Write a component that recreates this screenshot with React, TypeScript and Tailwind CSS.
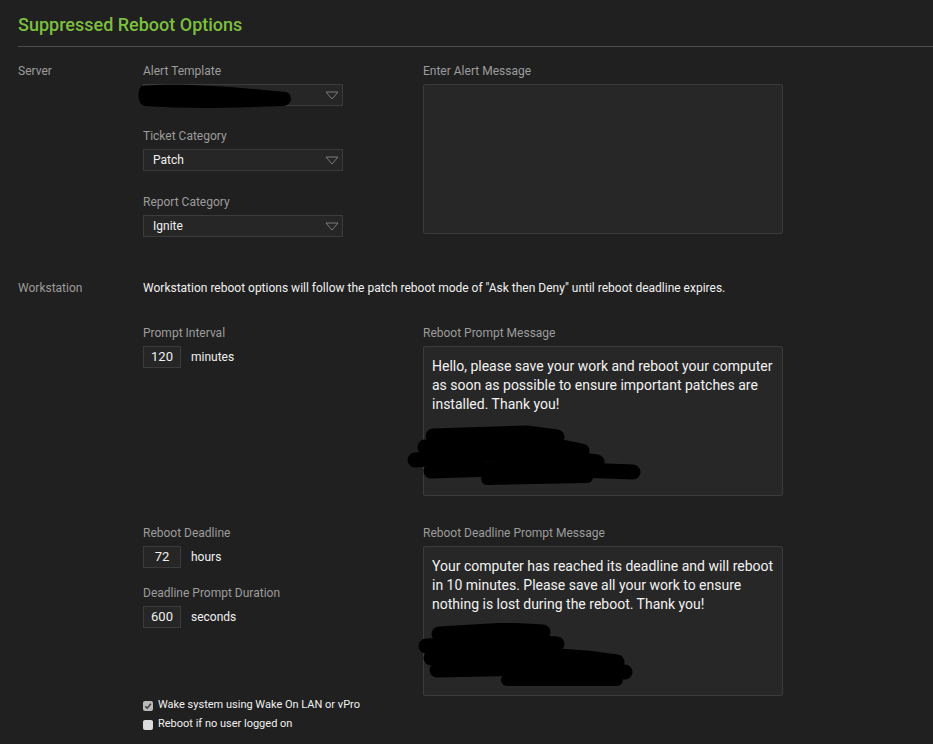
import type { ReactNode } from "react";

const FONT = { fontFamily: "Roboto, 'Liberation Sans', sans-serif" };

function Label({ children }: { children: ReactNode }) {
  return <div className="text-[12px] leading-[14px] text-[#9c9c9c]">{children}</div>;
}

function Arrow() {
  return (
    <svg width="14" height="9" viewBox="0 0 14 9" className="shrink-0">
      <polygon points="1,1 13,1 7,8" fill="none" stroke="#7a7a7a" strokeWidth="1" />
    </svg>
  );
}

function Select({ value, children }: { value?: string; children?: ReactNode }) {
  return (
    <div className="relative mt-[6px] flex h-[22px] w-[200px] items-center justify-between border border-[#3b3b3b] bg-[#262626] pl-[9px] pr-[3px]">
      <span className="text-[12px] text-[#f0f0f0]">{value}</span>
      <Arrow />
      {children}
    </div>
  );
}

function NumberField({ value, unit }: { value: string; unit: string }) {
  return (
    <div className="mt-[6px] flex items-center gap-[10px]">
      <div className="flex h-[22px] w-[38px] items-center justify-center border border-[#3b3b3b] bg-[#262626] text-[13px] text-[#f0f0f0]">
        {value}
      </div>
      <span className="text-[12px] text-[#f0f0f0]">{unit}</span>
    </div>
  );
}

function MessageBox({ text, children }: { text?: string; children?: ReactNode }) {
  return (
    <div className="relative mt-[6px] h-[150px] w-[360px] rounded-[2px] border border-[#3b3b3b] bg-[#272727] px-[8px] pt-[10px] text-[14px] leading-[19px] text-[#f2f2f2]">
      {text}
      {children}
    </div>
  );
}

function Checkbox({ checked, label }: { checked?: boolean; label: string }) {
  return (
    <div className="flex h-[19px] items-center gap-[5px]">
      <span
        className={`flex h-[10px] w-[10px] items-center justify-center rounded-[2px] ${checked ? "bg-[#b9b9b9]" : "bg-[#dcdcdc]"}`}
      >
        {checked && (
          <svg width="8" height="8" viewBox="0 0 8 8">
            <path d="M1.2 4.2 L3.2 6.2 L6.8 1.8" fill="none" stroke="#3a3a3a" strokeWidth="1.4" />
          </svg>
        )}
      </span>
      <span className="text-[11px] text-[#f0f0f0]">{label}</span>
    </div>
  );
}

export default function App() {
  return (
    <div className="min-h-[744px] w-[933px] bg-[#202020]" style={FONT}>
      <div className="ml-[18px] border-b border-[#4d4d4d] pb-[10px] pt-[14px]">
        <h1 className="text-[18px] font-medium leading-[22px] text-[#7cbf3f]">Suppressed Reboot Options</h1>
      </div>

      {/* Server */}
      <div className="mt-[17px] flex pl-[18px]">
        <div className="w-[125px]">
          <Label>Server</Label>
        </div>
        <div className="w-[280px]">
          <Label>Alert Template</Label>
          <Select>
            <svg className="absolute left-[-8px] top-[-2px]" width="160" height="26" viewBox="0 0 160 26">
              <path d="M6 3 C40 0 90 3 150 9 C157 11 157 21 148 23 C100 25 50 26 8 23 C1 21 1 5 6 3 Z" fill="#000" />
            </svg>
          </Select>
          <div className="mt-[23px]">
            <Label>Ticket Category</Label>
            <Select value="Patch" />
          </div>
          <div className="mt-[24px]">
            <Label>Report Category</Label>
            <Select value="Ignite" />
          </div>
        </div>
        <div>
          <Label>Enter Alert Message</Label>
          <MessageBox />
        </div>
      </div>

      {/* Workstation */}
      <div className="mt-[44px] flex pl-[18px]">
        <div className="w-[125px]">
          <Label>Workstation</Label>
        </div>
        <div>
          <div className="text-[12px] leading-[14px] text-[#f0f0f0]">
            Workstation reboot options will follow the patch reboot mode of "Ask then Deny" until reboot deadline expires.
          </div>

          <div className="mt-[31px] flex">
            <div className="w-[280px]">
              <Label>Prompt Interval</Label>
              <NumberField value="120" unit="minutes" />
            </div>
            <div>
              <Label>Reboot Prompt Message</Label>
              <MessageBox text="Hello, please save your work and reboot your computer as soon as possible to ensure important patches are installed. Thank you!">
                <svg className="absolute left-[-17px] top-[78px]" width="240" height="64" viewBox="0 0 240 64">
                  <g stroke="#000" strokeLinecap="round" fill="none">
                    <path d="M26 11 L120 8 L150 12" strokeWidth="15" />
                    <path d="M18 22 L140 19 L175 26" strokeWidth="15" />
                    <path d="M8 35 L80 29 L160 33 L190 37" strokeWidth="15" />
                    <path d="M24 46 L120 43 L226 47" strokeWidth="15" />
                    <path d="M80 54 L180 52" strokeWidth="12" />
                  </g>
                </svg>
              </MessageBox>
            </div>
          </div>

          <div className="mt-[30px] flex">
            <div className="w-[280px]">
              <Label>Reboot Deadline</Label>
              <NumberField value="72" unit="hours" />
              <div className="mt-[18px]">
                <Label>Deadline Prompt Duration</Label>
                <NumberField value="600" unit="seconds" />
              </div>
            </div>
            <div>
              <Label>Reboot Deadline Prompt Message</Label>
              <MessageBox text="Your computer has reached its deadline and will reboot in 10 minutes. Please save all your work to ensure nothing is lost during the reboot. Thank you!">
                <svg className="absolute left-[-7px] top-[76px]" width="225" height="68" viewBox="0 0 225 68">
                  <g stroke="#000" strokeLinecap="round" fill="none">
                    <path d="M22 11 L90 7 L126 9" strokeWidth="15" />
                    <path d="M9 23 L100 19 L140 21" strokeWidth="15" />
                    <path d="M14 35 L110 31 L170 35 L200 39" strokeWidth="15" />
                    <path d="M20 47 L120 45 L208 49" strokeWidth="15" />
                    <path d="M90 57 L200 57" strokeWidth="12" />
                  </g>
                </svg>
              </MessageBox>
            </div>
          </div>

          <div className="mt-0">
            <Checkbox checked label="Wake system using Wake On LAN or vPro" />
            <Checkbox label="Reboot if no user logged on" />
          </div>
        </div>
      </div>
    </div>
  );
}
